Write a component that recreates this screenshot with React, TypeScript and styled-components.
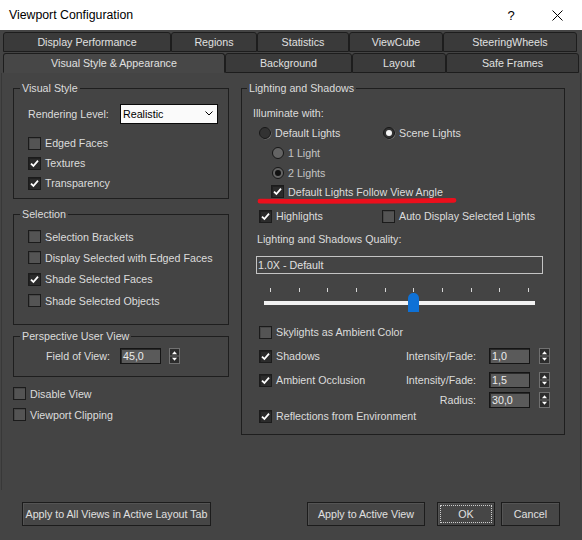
import React from "react";
import styled, { createGlobalStyle } from "styled-components";

const GlobalStyle = createGlobalStyle`
  html, body {
    margin: 0;
    padding: 0;
    background: #444444;
  }
  body {
    font-family: "Liberation Sans", Arial, sans-serif;
    font-size: 10.7px;
    color: #dcdcdc;
  }
  * {
    box-sizing: border-box;
  }
`;

const Window = styled.div`
  position: relative;
  width: 582px;
  height: 540px;
  background: #444444;
  display: flex;
  flex-direction: column;
  overflow: hidden;
`;

const TitleBar = styled.div`
  height: 30px;
  flex: none;
  background: #ffffff;
  color: #000000;
  display: flex;
  align-items: center;
  padding: 0 2px 0 9px;
  font-size: 12.3px;
`;

const TitleText = styled.span`
  flex: 1;
`;

const CaptionButton = styled.span`
  width: 46px;
  height: 30px;
  display: flex;
  align-items: center;
  justify-content: center;
  font-size: 13px;
`;

const TabStrip = styled.div`
  flex: none;
  display: flex;
  flex-direction: column;
  gap: 1px;
  padding: 2px 0 0 3px;
`;

const TabRow = styled.div`
  display: flex;
  height: 20px;
`;

const Tab = styled.div<{ $w: number; $active?: boolean }>`
  width: ${(p) => p.$w}px;
  height: 100%;
  display: flex;
  align-items: center;
  justify-content: center;
  border: 1px solid #1d1d1d;
  border-bottom-color: ${(p) => (p.$active ? "transparent" : "#1d1d1d")};
  border-radius: 3px 3px 0 0;
  background: ${(p) => (p.$active ? "#474747" : "#3a3a3a")};
  color: #e0e0e0;
  white-space: nowrap;
`;

const Page = styled.div`
  flex: none;
  height: 417px;
  margin: 0 1px;
  border-left: 1px solid #383838;
  border-right: 1px solid #383838;
  display: flex;
  align-items: flex-start;
  gap: 12px;
  padding: 8px 0 0 11px;
`;

const Column = styled.div<{ $w: number }>`
  width: ${(p) => p.$w}px;
  display: flex;
  flex-direction: column;
`;

const Group = styled.fieldset<{ $pad: string; $mt?: number }>`
  margin: ${(p) => p.$mt ?? 0}px 0 0 0;
  padding: ${(p) => p.$pad};
  border: 1px solid #1e1e1e;
  min-width: 0;
  width: 100%;
`;

const Legend = styled.legend<{ $ml: number }>`
  padding: 0 2px;
  margin-left: ${(p) => p.$ml}px;
  line-height: 14px;
  color: #dcdcdc;
`;

const Row = styled.div<{ $h: number; $indent?: number; $mt?: number }>`
  display: flex;
  align-items: center;
  height: ${(p) => p.$h}px;
  padding-left: ${(p) => p.$indent ?? 0}px;
  margin-top: ${(p) => p.$mt ?? 0}px;
  white-space: nowrap;
`;

const Item = styled.div<{ $w?: number }>`
  display: flex;
  align-items: center;
  flex: none;
  width: ${(p) => (p.$w ? `${p.$w}px` : "auto")};
`;

const ItemText = styled.span<{ $dim?: boolean; $gap?: number }>`
  margin-left: ${(p) => p.$gap ?? 4}px;
  color: ${(p) => (p.$dim ? "#c4c4c4" : "#dcdcdc")};
`;

const CheckBox = styled.span<{ $checked?: boolean }>`
  width: 13px;
  height: 13px;
  flex: none;
  border: 1px solid #1b1b1b;
  background: ${(p) => (p.$checked ? "#2b2b2b" : "#545454")};
  box-shadow: inset 1px 1px 0 ${(p) => (p.$checked ? "#202020" : "#464646")};
  display: inline-flex;
  align-items: center;
  justify-content: center;
`;

const RadioDot = styled.span<{ $checked?: boolean; $disabled?: boolean }>`
  width: 12px;
  height: 12px;
  flex: none;
  border-radius: 50%;
  border: 1px solid #161616;
  background: ${(p) => (p.$disabled ? "#646464" : "#323232")};
  box-shadow: ${(p) => (p.$disabled ? "none" : "0.5px 0.5px 0 #777777")};
  display: inline-flex;
  align-items: center;
  justify-content: center;
  &::after {
    content: "";
    display: ${(p) => (p.$checked ? "block" : "none")};
    width: 6px;
    height: 6px;
    border-radius: 50%;
    background: ${(p) => (p.$disabled ? "#111111" : "#f4f4f4")};
  }
`;

const FieldLabel = styled.span<{ $w: number; $right?: boolean }>`
  width: ${(p) => p.$w}px;
  flex: none;
  text-align: ${(p) => (p.$right ? "right" : "left")};
`;

const Select = styled.div`
  width: 98px;
  height: 20px;
  background: #fafafa;
  border: 1px solid #0a0a0a;
  color: #000000;
  display: flex;
  align-items: center;
  justify-content: space-between;
  padding: 0 4px 0 2px;
`;

const NumBox = styled.div`
  width: 41px;
  height: 16px;
  flex: none;
  background: #5a5a5a;
  border: 1px solid #151515;
  box-shadow: inset 1px 1px 0 #2a2a2a;
  color: #ececec;
  display: flex;
  align-items: center;
  padding-left: 2px;
`;

const SpinWrap = styled.span<{ $ml: number }>`
  display: inline-flex;
  margin-left: ${(p) => p.$ml}px;
  flex: none;
`;

const QualityBox = styled.div`
  width: 287px;
  height: 18px;
  border: 1px solid #c4c4c4;
  display: flex;
  align-items: center;
  padding-left: 1px;
  color: #e0e0e0;
`;

const Slider = styled.div`
  position: relative;
  width: 271px;
  height: 30px;
`;

const TickRow = styled.div`
  display: flex;
  justify-content: space-between;
  height: 4px;
  margin-top: 4px;
  padding: 0 6px;
`;

const Tick = styled.span`
  width: 1px;
  height: 4px;
  background: #d6d6d6;
`;

const Track = styled.div`
  height: 4px;
  margin-top: 9px;
  background: #f2f2f2;
`;

const Thumb = styled.span`
  position: absolute;
  left: 144px;
  top: 9px;
  display: flex;
`;

const Annotation = styled.svg`
  position: absolute;
  left: 256px;
  top: 196px;
  pointer-events: none;
`;

const ButtonBar = styled.div`
  display: flex;
  align-items: flex-start;
  padding: 12px 22px 0 22px;
`;

const Spacer = styled.div`
  flex: 1;
`;

const Button = styled.button<{ $w: number; $ml?: number; $focused?: boolean }>`
  width: ${(p) => p.$w}px;
  height: 24px;
  margin-left: ${(p) => p.$ml ?? 0}px;
  padding: 0;
  font-family: inherit;
  font-size: 10.7px;
  color: #e0e0e0;
  background: #464646;
  border: 1px solid #1c1c1c;
  box-shadow: inset 1px 1px 0 #545454;
  white-space: nowrap;
  outline: ${(p) => (p.$focused ? "1px dotted #cfcfcf" : "none")};
  outline-offset: -4px;
`;

function Check({ label, checked, w, dim }: { label: string; checked?: boolean; w?: number; dim?: boolean }) {
  return (
    <Item $w={w}>
      <CheckBox $checked={checked}>
        {checked && (
          <svg width="9" height="9" viewBox="0 0 9 9">
            <polyline points="1,4.6 3.4,7 8,1.6" fill="none" stroke="#ffffff" strokeWidth="1.8" />
          </svg>
        )}
      </CheckBox>
      <ItemText $dim={dim}>{label}</ItemText>
    </Item>
  );
}

function Radio({ label, checked, disabled, w }: { label: string; checked?: boolean; disabled?: boolean; w?: number }) {
  return (
    <Item $w={w}>
      <RadioDot $checked={checked} $disabled={disabled} />
      <ItemText $dim={disabled} $gap={4}>
        {label}
      </ItemText>
    </Item>
  );
}

function Spin({ ml }: { ml: number }) {
  return (
    <SpinWrap $ml={ml}>
      <svg width="11" height="16" viewBox="0 0 11 16">
        <rect x="0.5" y="0.5" width="10" height="15" fill="#2c2c2c" stroke="#707070" />
        <line x1="1" y1="8" x2="10" y2="8" stroke="#6a6a6a" />
        <path d="M3 6.2 L5.5 3.2 L8 6.2 Z" fill="#ffffff" />
        <path d="M3 9.8 L5.5 12.8 L8 9.8 Z" fill="#ffffff" />
      </svg>
    </SpinWrap>
  );
}

const topTabs: [string, number][] = [
  ["Display Performance", 168],
  ["Regions", 86],
  ["Statistics", 92],
  ["ViewCube", 94],
  ["SteeringWheels", 134],
];

const bottomTabs: [string, number][] = [
  ["Visual Style & Appearance", 222],
  ["Background", 127],
  ["Layout", 94],
  ["Safe Frames", 133],
];

export default function App() {
  return (
    <Window>
      <GlobalStyle />
      <TitleBar>
        <TitleText>Viewport Configuration</TitleText>
        <CaptionButton>?</CaptionButton>
        <CaptionButton>
          <svg width="11" height="11" viewBox="0 0 11 11">
            <path d="M0.5 0.5 L10.5 10.5 M10.5 0.5 L0.5 10.5" stroke="#000000" strokeWidth="1" />
          </svg>
        </CaptionButton>
      </TitleBar>

      <TabStrip>
        <TabRow>
          {topTabs.map(([name, w]) => (
            <Tab key={name} $w={w}>
              {name}
            </Tab>
          ))}
        </TabRow>
        <TabRow>
          {bottomTabs.map(([name, w], i) => (
            <Tab key={name} $w={w} $active={i === 0}>
              {name}
            </Tab>
          ))}
        </TabRow>
      </TabStrip>

      <Page>
        <Column $w={216}>
          <Group $pad="8px 10px 5px 14px">
            <Legend $ml={-8}>Visual Style</Legend>
            <Row $h={21}>
              <FieldLabel $w={92}>Rendering Level:</FieldLabel>
              <Select>
                <span>Realistic</span>
                <svg width="8" height="5" viewBox="0 0 8 5">
                  <polyline points="0.5,0.5 4,4 7.5,0.5" fill="none" stroke="#000000" strokeWidth="1" />
                </svg>
              </Select>
            </Row>
            <Row $h={20} $mt={9}>
              <Check label="Edged Faces" />
            </Row>
            <Row $h={20}>
              <Check label="Textures" checked />
            </Row>
            <Row $h={20}>
              <Check label="Transparency" checked />
            </Row>
          </Group>

          <Group $pad="5px 10px 13px 14px" $mt={8}>
            <Legend $ml={-8}>Selection</Legend>
            <Row $h={21.3}>
              <Check label="Selection Brackets" />
            </Row>
            <Row $h={21.3}>
              <Check label="Display Selected with Edged Faces" />
            </Row>
            <Row $h={21.3}>
              <Check label="Shade Selected Faces" checked />
            </Row>
            <Row $h={21.3}>
              <Check label="Shade Selected Objects" />
            </Row>
          </Group>

          <Group $pad="3px 10px 10px 14px" $mt={4}>
            <Legend $ml={-8}>Perspective User View</Legend>
            <Row $h={20} $indent={18}>
              <FieldLabel $w={74}>Field of View:</FieldLabel>
              <NumBox>45,0</NumBox>
              <Spin ml={8} />
            </Row>
          </Group>

          <Row $h={21} $mt={6.3}>
            <Check label="Disable View" />
          </Row>
          <Row $h={21}>
            <Check label="Viewport Clipping" />
          </Row>
        </Column>

        <Column $w={324}>
          <Group $pad="8px 10px 10px 11px">
            <Legend $ml={-6}>Lighting and Shadows</Legend>
            <Row $h={20}>Illuminate with:</Row>
            <Row $h={20} $indent={6}>
              <Radio label="Default Lights" w={124} />
              <Radio label="Scene Lights" checked />
            </Row>
            <Row $h={20} $indent={19}>
              <Radio label="1 Light" disabled />
            </Row>
            <Row $h={19} $indent={19}>
              <Radio label="2 Lights" checked disabled />
            </Row>
            <Row $h={19} $indent={18}>
              <Check label="Default Lights Follow View Angle" checked />
            </Row>
            <Row $h={20} $indent={6} $mt={5}>
              <Check label="Highlights" checked w={123} />
              <Check label="Auto Display Selected Lights" />
            </Row>
            <Row $h={19} $indent={4} $mt={3}>
              Lighting and Shadows Quality:
            </Row>
            <Row $h={18} $indent={3} $mt={8}>
              <QualityBox>1.0X - Default</QualityBox>
            </Row>
            <Row $h={30} $indent={11} $mt={10}>
              <Slider>
                <TickRow>
                  {Array.from({ length: 10 }).map((_, i) => (
                    <Tick key={i} />
                  ))}
                </TickRow>
                <Track />
                <Thumb>
                  <svg width="11" height="19" viewBox="0 0 11 19">
                    <path d="M0 19 V5.5 C0 2 2.5 0 5.5 0 C8.5 0 11 2 11 5.5 V19 Z" fill="#0e71d6" />
                  </svg>
                </Thumb>
              </Slider>
            </Row>
            <Row $h={20} $indent={6} $mt={8}>
              <Check label="Skylights as Ambient Color" />
            </Row>
            <Row $h={22} $indent={6} $mt={3}>
              <Check label="Shadows" checked w={142} />
              <FieldLabel $w={75} $right>
                Intensity/Fade:
              </FieldLabel>
              <SpinWrap $ml={13}>
                <NumBox>1,0</NumBox>
              </SpinWrap>
              <Spin ml={9} />
            </Row>
            <Row $h={22} $indent={6} $mt={2}>
              <Check label="Ambient Occlusion" checked w={142} />
              <FieldLabel $w={75} $right>
                Intensity/Fade:
              </FieldLabel>
              <SpinWrap $ml={13}>
                <NumBox>1,5</NumBox>
              </SpinWrap>
              <Spin ml={9} />
            </Row>
            <Row $h={17} $indent={148}>
              <FieldLabel $w={75} $right>
                Radius:
              </FieldLabel>
              <SpinWrap $ml={13}>
                <NumBox>30,0</NumBox>
              </SpinWrap>
              <Spin ml={9} />
            </Row>
            <Row $h={16} $indent={6}>
              <Check label="Reflections from Environment" checked />
            </Row>
          </Group>
        </Column>
      </Page>

      <ButtonBar>
        <Button $w={189}>Apply to All Views in Active Layout Tab</Button>
        <Spacer />
        <Button $w={118}>Apply to Active View</Button>
        <Button $w={58} $ml={12} $focused>
          OK
        </Button>
        <Button $w={59} $ml={6}>
          Cancel
        </Button>
      </ButtonBar>

      <Annotation width="202" height="10" viewBox="0 0 202 10">
        <path d="M4 5.2 Q100 5.8 198 4.4" fill="none" stroke="#ec0f1c" strokeWidth="4.8" strokeLinecap="round" />
      </Annotation>
    </Window>
  );
}
